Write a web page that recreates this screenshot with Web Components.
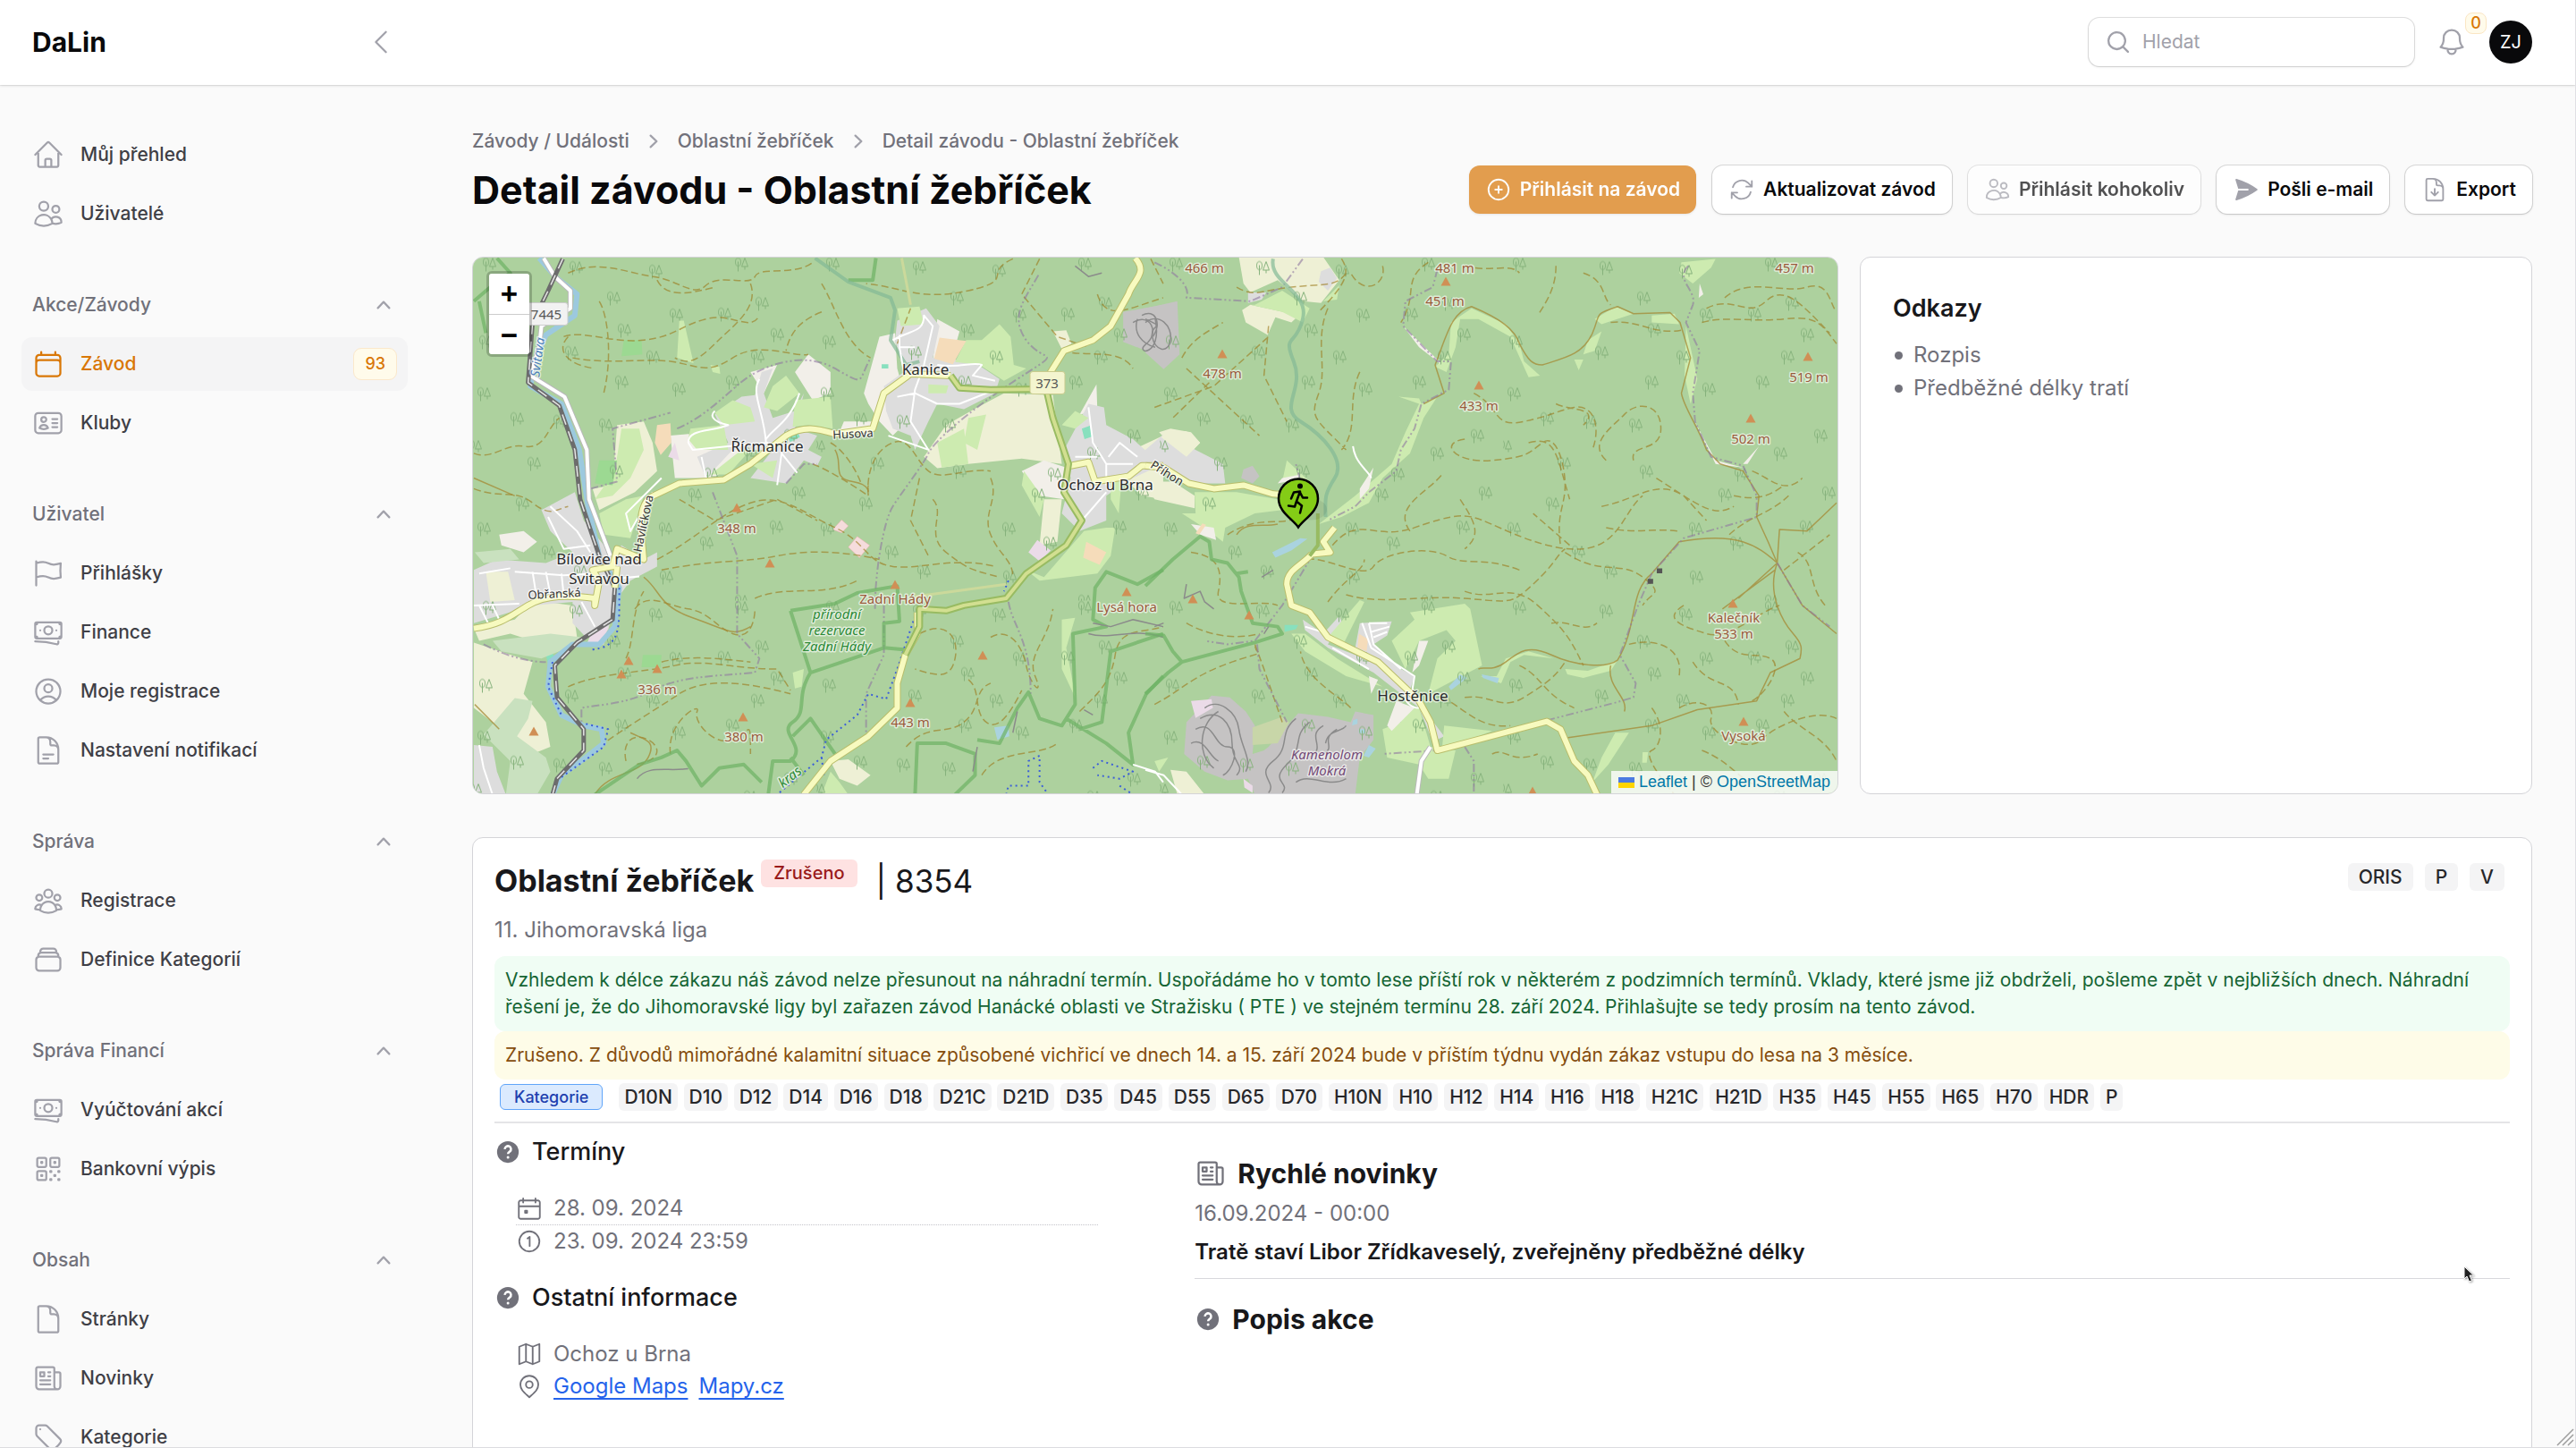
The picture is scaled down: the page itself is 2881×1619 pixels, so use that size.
<!DOCTYPE html>
<html lang="cs">
<head>
<meta charset="utf-8">
<title>Detail závodu - Oblastní žebříček</title>
<style>
  html, body { margin: 0; height: 100%; }
  body { font-family: Inter, "Noto Sans", sans-serif; font-size: 21px; line-height: 30px; color: #09090b; background: #fafafa; overflow: hidden; }
</style>
</head>
<body>
<app-shell>
  <top-bar slot="top"></top-bar>
  <side-nav slot="nav">
    <nav-group>
      <nav-item icon="home">Můj přehled</nav-item>
      <nav-item icon="users">Uživatelé</nav-item>
    </nav-group>
    <nav-group label="Akce/Závody">
      <nav-item icon="calendar" active badge="93">Závod</nav-item>
      <nav-item icon="identification">Kluby</nav-item>
    </nav-group>
    <nav-group label="Uživatel">
      <nav-item icon="flag">Přihlášky</nav-item>
      <nav-item icon="banknotes">Finance</nav-item>
      <nav-item icon="user-circle">Moje registrace</nav-item>
      <nav-item icon="document-text">Nastavení notifikací</nav-item>
    </nav-group>
    <nav-group label="Správa">
      <nav-item icon="user-group">Registrace</nav-item>
      <nav-item icon="stack">Definice Kategorií</nav-item>
    </nav-group>
    <nav-group label="Správa Financí">
      <nav-item icon="banknotes">Vyúčtování akcí</nav-item>
      <nav-item icon="qr">Bankovní výpis</nav-item>
    </nav-group>
    <nav-group label="Obsah">
      <nav-item icon="document">Stránky</nav-item>
      <nav-item icon="newspaper">Novinky</nav-item>
      <nav-item icon="tag">Kategorie</nav-item>
    </nav-group>
  </side-nav>
  <page-header>
    <action-button slot="actions" icon="plus-circle" kind="primary" muted>Přihlásit na závod</action-button>
    <action-button slot="actions" icon="arrow-path">Aktualizovat závod</action-button>
    <action-button slot="actions" icon="users" muted>Přihlásit kohokoliv</action-button>
    <action-button slot="actions" icon="paper-airplane">Pošli e-mail</action-button>
    <action-button slot="actions" icon="document-down">Export</action-button>
  </page-header>
  <race-overview>
    <race-map slot="map"></race-map>
    <link-card slot="links"></link-card>
  </race-overview>
  <race-detail></race-detail>
</app-shell>
<pointer-mark></pointer-mark>
<resize-grip></resize-grip>

<script>
const ICONS = {
  home: ['m2.25 12 8.954-8.955c.44-.439 1.152-.439 1.591 0L21.75 12M4.5 9.75v10.125c0 .621.504 1.125 1.125 1.125H9.75v-4.875c0-.621.504-1.125 1.125-1.125h2.25c.621 0 1.125.504 1.125 1.125V21h4.125c.621 0 1.125-.504 1.125-1.125V9.75M8.25 21h8.25'],
  users: ['M15 19.128a9.38 9.38 0 0 0 2.625.372 9.337 9.337 0 0 0 4.121-.952 4.125 4.125 0 0 0-7.533-2.493M15 19.128v-.003c0-1.113-.285-2.16-.786-3.07M15 19.128v.106A12.318 12.318 0 0 1 8.624 21c-2.331 0-4.512-.645-6.374-1.766l-.001-.109a6.375 6.375 0 0 1 11.964-3.07M12 6.375a3.375 3.375 0 1 1-6.75 0 3.375 3.375 0 0 1 6.75 0Zm8.25 2.25a2.625 2.625 0 1 1-5.25 0 2.625 2.625 0 0 1 5.25 0Z'],
  calendar: ['M6.75 3v2.25M17.25 3v2.25M3 18.75V7.5a2.25 2.25 0 0 1 2.25-2.25h13.5A2.25 2.25 0 0 1 21 7.5v11.25m-18 0A2.25 2.25 0 0 0 5.25 21h13.5A2.25 2.25 0 0 0 21 18.75m-18 0v-7.5A2.25 2.25 0 0 1 5.25 9h13.5A2.25 2.25 0 0 1 21 11.25v7.5'],
  identification: ['M15 9h3.75M15 12h3.75M15 15h3.75M4.5 19.5h15a2.25 2.25 0 0 0 2.25-2.25V6.75A2.25 2.25 0 0 0 19.5 4.5h-15a2.25 2.25 0 0 0-2.25 2.25v10.5A2.25 2.25 0 0 0 4.5 19.5Zm6-10.125a1.875 1.875 0 1 1-3.75 0 1.875 1.875 0 0 1 3.75 0Zm1.294 6.336a6.721 6.721 0 0 1-3.17.789 6.721 6.721 0 0 1-3.168-.789 3.376 3.376 0 0 1 6.338 0Z'],
  flag: ['M3 3v1.5M3 21v-6m0 0 2.77-.693a9 9 0 0 1 6.208.682l.108.054a9 9 0 0 0 6.086.71l3.114-.732a48.524 48.524 0 0 1-.005-10.499l-3.11.732a9 9 0 0 1-6.085-.711l-.108-.054a9 9 0 0 0-6.208-.682L3 4.5M3 15V4.5'],
  banknotes: ['M2.25 18.75a60.07 60.07 0 0 1 15.797 2.101c.727.198 1.453-.342 1.453-1.096V18.75M3.75 4.5v.75A.75.75 0 0 1 3 6h-.75m0 0v-.375c0-.621.504-1.125 1.125-1.125H20.25M2.25 6v9m18-10.5v.75c0 .414.336.75.75.75h.75m-1.5-1.5h.375c.621 0 1.125.504 1.125 1.125v9.75c0 .621-.504 1.125-1.125 1.125h-.375m1.5-1.5H21a.75.75 0 0 0-.75.75v.75m0 0H3.75m0 0h-.375a1.125 1.125 0 0 1-1.125-1.125V15m1.5 1.5v-.75A.75.75 0 0 0 3 15h-.75M15 10.5a3 3 0 1 1-6 0 3 3 0 0 1 6 0Zm3 0h.008v.008H18V10.5Zm-12 0h.008v.008H6V10.5Z'],
  'user-circle': ['M17.982 18.725A7.488 7.488 0 0 0 12 15.75a7.488 7.488 0 0 0-5.982 2.975m11.963 0a9 9 0 1 0-11.963 0m11.963 0A8.966 8.966 0 0 1 12 21a8.966 8.966 0 0 1-5.982-2.275M15 9.75a3 3 0 1 1-6 0 3 3 0 0 1 6 0Z'],
  'document-text': ['M19.5 14.25v-2.625a3.375 3.375 0 0 0-3.375-3.375h-1.5A1.125 1.125 0 0 1 13.5 7.125v-1.5a3.375 3.375 0 0 0-3.375-3.375H8.25m0 12.75h7.5m-7.5 3H12M10.5 2.25H5.625c-.621 0-1.125.504-1.125 1.125v17.25c0 .621.504 1.125 1.125 1.125h12.75c.621 0 1.125-.504 1.125-1.125V11.25a9 9 0 0 0-9-9Z'],
  'user-group': ['M18 18.72a9.094 9.094 0 0 0 3.741-.479 3 3 0 0 0-4.682-2.72m.94 3.198.001.031c0 .225-.012.447-.037.666A11.944 11.944 0 0 1 12 21c-2.17 0-4.207-.576-5.963-1.584A6.062 6.062 0 0 1 6 18.719m12 0a5.971 5.971 0 0 0-.941-3.197m0 0A5.995 5.995 0 0 0 12 12.75a5.995 5.995 0 0 0-5.058 2.772m0 0a3 3 0 0 0-4.681 2.72 8.986 8.986 0 0 0 3.74.477m.94-3.197a5.971 5.971 0 0 0-.94 3.197M15 6.75a3 3 0 1 1-6 0 3 3 0 0 1 6 0Zm6 3a2.25 2.25 0 1 1-4.5 0 2.25 2.25 0 0 1 4.5 0Zm-13.5 0a2.25 2.25 0 1 1-4.5 0 2.25 2.25 0 0 1 4.5 0Z'],
  stack: ['M6 6.878V6a2.25 2.25 0 0 1 2.25-2.25h7.5A2.25 2.25 0 0 1 18 6v.878m-12 0c.235-.083.487-.128.75-.128h10.5c.263 0 .515.045.75.128m-12 0A2.25 2.25 0 0 0 4.5 9v.878m13.5-3A2.25 2.25 0 0 1 19.5 9v.878m0 0a2.246 2.246 0 0 0-.75-.128H5.25c-.263 0-.515.045-.75.128m15 0A2.25 2.25 0 0 1 21 12v6a2.25 2.25 0 0 1-2.25 2.25H5.25A2.25 2.25 0 0 1 3 18v-6c0-.98.626-1.813 1.5-2.122'],
  qr: ['M3.75 4.875c0-.621.504-1.125 1.125-1.125h4.5c.621 0 1.125.504 1.125 1.125v4.5c0 .621-.504 1.125-1.125 1.125h-4.5A1.125 1.125 0 0 1 3.75 9.375v-4.5ZM3.75 14.625c0-.621.504-1.125 1.125-1.125h4.5c.621 0 1.125.504 1.125 1.125v4.5c0 .621-.504 1.125-1.125 1.125h-4.5a1.125 1.125 0 0 1-1.125-1.125v-4.5ZM13.5 4.875c0-.621.504-1.125 1.125-1.125h4.5c.621 0 1.125.504 1.125 1.125v4.5c0 .621-.504 1.125-1.125 1.125h-4.5A1.125 1.125 0 0 1 13.5 9.375v-4.5ZM6.75 6.75h.75v.75h-.75v-.75ZM6.75 16.5h.75v.75h-.75v-.75ZM16.5 6.75h.75v.75h-.75v-.75ZM13.5 13.5h.75v.75h-.75v-.75ZM13.5 19.5h.75v.75h-.75v-.75ZM19.5 13.5h.75v.75h-.75v-.75ZM19.5 19.5h.75v.75h-.75v-.75ZM16.5 16.5h.75v.75h-.75v-.75Z'],
  document: ['M19.5 14.25v-2.625a3.375 3.375 0 0 0-3.375-3.375h-1.5A1.125 1.125 0 0 1 13.5 7.125v-1.5a3.375 3.375 0 0 0-3.375-3.375H8.25m2.25 0H5.625c-.621 0-1.125.504-1.125 1.125v17.25c0 .621.504 1.125 1.125 1.125h12.75c.621 0 1.125-.504 1.125-1.125V11.25a9 9 0 0 0-9-9Z'],
  'document-down': ['M19.5 14.25v-2.625a3.375 3.375 0 0 0-3.375-3.375h-1.5A1.125 1.125 0 0 1 13.5 7.125v-1.5a3.375 3.375 0 0 0-3.375-3.375H8.25m.75 12 3 3m0 0 3-3m-3 3v-6m-1.5-9H5.625c-.621 0-1.125.504-1.125 1.125v17.25c0 .621.504 1.125 1.125 1.125h12.75c.621 0 1.125-.504 1.125-1.125V11.25a9 9 0 0 0-9-9Z'],
  newspaper: ['M12 7.5h1.5m-1.5 3h1.5m-7.5 3h7.5m-7.5 3h7.5m3-9h3.375c.621 0 1.125.504 1.125 1.125V18a2.25 2.25 0 0 1-2.25 2.25M16.5 7.5V18a2.25 2.25 0 0 0 2.25 2.25M16.5 7.5V4.875c0-.621-.504-1.125-1.125-1.125H4.125C3.504 3.75 3 4.254 3 4.875V18a2.25 2.25 0 0 0 2.25 2.25h13.5M6 7.5h3v3H6v-3Z'],
  tag: ['M9.568 3H5.25A2.25 2.25 0 0 0 3 5.25v4.318c0 .597.237 1.17.659 1.591l9.581 9.581c.699.699 1.78.872 2.607.33a18.095 18.095 0 0 0 5.223-5.223c.542-.827.369-1.908-.33-2.607L11.16 3.66A2.25 2.25 0 0 0 9.568 3ZM6 6h.008v.008H6V6Z'],
  bell: ['M14.857 17.082a23.848 23.848 0 0 0 5.454-1.31A8.967 8.967 0 0 1 18 9.75V9A6 6 0 0 0 6 9v.75a8.967 8.967 0 0 1-2.312 6.022c1.733.64 3.56 1.085 5.455 1.31m5.714 0a24.255 24.255 0 0 1-5.714 0m5.714 0a3 3 0 1 1-5.714 0'],
  'plus-circle': ['M12 9v6m3-3H9m12 0a9 9 0 1 1-18 0 9 9 0 0 1 18 0Z'],
  'arrow-path': ['M16.023 9.348h4.992v-.001M2.985 19.644v-4.992m0 0h4.992m-4.993 0 3.181 3.183a8.25 8.25 0 0 0 13.803-3.7M4.031 9.865a8.25 8.25 0 0 1 13.803-3.7l3.181 3.182m0-4.991v4.99'],
  'chevron-left': ['M15.75 19.5 8.25 12l7.5-7.5'],
  'calendar-day': ['M6.5 3.2v3.6M17.5 3.2v3.6M4.3 5h15.4a1.7 1.7 0 0 1 1.7 1.7v13a1.7 1.7 0 0 1-1.7 1.7H4.3a1.7 1.7 0 0 1-1.7-1.7v-13A1.7 1.7 0 0 1 4.3 5ZM2.6 10.2h18.8M8.2 14.2h1.8v1.8H8.2Z'],
  'circle-one': ['M21 12a9 9 0 1 1-18 0 9 9 0 0 1 18 0ZM10.4 9.4 12.3 7.9v8.2'],
  map: ['M3 5.4 9 3l6 2.4L21 3v15.6L15 21l-6-2.4L3 21ZM9 3v15.6M15 5.4V21'],
  pin: ['M15 10.5a3 3 0 1 1-6 0 3 3 0 0 1 6 0ZM20 10.6c0 4.6-3.6 7.2-8 11.2-4.4-4-8-6.6-8-11.2a8 8 0 0 1 16 0Z'],
  'paper-airplane': ['M3.478 2.404a.75.75 0 0 0-.926.941l2.432 7.905H13.5a.75.75 0 0 1 0 1.5H4.984l-2.432 7.905a.75.75 0 0 0 .926.94 60.519 60.519 0 0 0 18.445-8.986.75.75 0 0 0 0-1.218A60.517 60.517 0 0 0 3.478 2.404Z', 24, 1],
  search: ['M9 3.5a5.5 5.5 0 1 0 0 11 5.5 5.5 0 0 0 0-11ZM2 9a7 7 0 1 1 12.452 4.391l3.328 3.329a.75.75 0 1 1-1.06 1.06l-3.329-3.328A7 7 0 0 1 2 9Z', 20, 1],
  'chevron-up': ['M14.77 12.79a.75.75 0 0 1-1.06-.02L10 8.832 6.29 12.77a.75.75 0 1 1-1.08-1.04l4.25-4.5a.75.75 0 0 1 1.08 0l4.25 4.5a.75.75 0 0 1-.02 1.06Z', 20, 1],
  'chevron-right': ['M7.21 14.77a.75.75 0 0 1 .02-1.06L11.168 10 7.23 6.29a.75.75 0 1 1 1.04-1.08l4.5 4.25a.75.75 0 0 1 0 1.08l-4.5 4.25a.75.75 0 0 1-1.06-.02Z', 20, 1]
};

/* Registers an element whose open shadow root is filled from the given markup. */
function element(name, markup, css) {
  customElements.define(name, class extends HTMLElement {
    constructor() {
      super();
      const t = document.createElement('template');
      t.innerHTML = `<style>*{box-sizing:border-box}${css}</style>${typeof markup === 'function' ? markup(this) : markup}`;
      this.attachShadow({ mode: 'open' }).append(t.content.cloneNode(true));
    }
  });
}

element('app-icon', el => {
  const name = el.getAttribute('name');
  if (name === 'question') {
    return `<svg viewBox="0 0 24 24" aria-hidden="true"><circle cx="12" cy="12" r="9.7" fill="currentColor"/><path d="M9.3 9.5a2.75 2.75 0 1 1 4.5 2.1c-1.1.8-1.7 1.2-1.7 2.2" fill="none" stroke="#fff" stroke-width="2"/><circle cx="12.1" cy="16.7" r="1.2" fill="#fff"/></svg>`;
  }
  const [d, box = 24, solid] = ICONS[name];
  return `<svg viewBox="0 0 ${box} ${box}" aria-hidden="true"><path d="${d}" ${solid ? 'fill="currentColor" fill-rule="evenodd"' : 'fill="none" stroke="currentColor" stroke-width="1.5" stroke-linecap="round" stroke-linejoin="round"'}/></svg>`;
}, `:host{display:block;flex:none;width:var(--icon,30px);height:var(--icon,30px)}svg{display:block;width:100%;height:100%}`);

element('app-shell', `
  <slot name="top"></slot>
  <div class="body"><slot name="nav"></slot><main><slot></slot></main></div>`,
  `:host{display:flex;flex-direction:column;box-sizing:border-box;height:100vh;overflow:hidden;border-right:1px solid #e0e0e4;border-bottom:1px solid #dcdce0}
   .body{display:flex;flex:1;min-height:0}
   main{flex:1;min-width:0;padding:48px 48px 0;display:flex;flex-direction:column;gap:48px;overflow:hidden}
   main ::slotted(*){flex:none}`);

element('top-bar', `
  <div class="brand"><a href="#">DaLin</a><button aria-label="Sbalit postranní panel"><app-icon name="chevron-left"></app-icon></button></div>
  <div class="tools">
    <label><app-icon name="search"></app-icon><input type="search" placeholder="Hledat" aria-label="Hledat"></label>
    <button class="bell" aria-label="Oznámení"><app-icon name="bell"></app-icon><span>0</span></button>
    <button class="avatar">ZJ</button>
  </div>`,
  `:host{display:flex;justify-content:space-between;align-items:center;flex:none;height:95px;padding-bottom:2px;background:#fff;box-shadow:0 0 0 1px rgba(9,9,11,.06),0 1px 3px rgba(0,0,0,.12);position:relative;box-sizing:border-box}
   button{border:0;background:none;padding:0;font:inherit;color:#a1a1aa}
   .brand{width:480px;padding:0 36px;display:flex;justify-content:space-between;align-items:center}
   .brand app-icon,.bell app-icon{--icon:36px}
   .brand a{font-size:30px;line-height:36px;font-weight:700;color:#09090b;text-decoration:none}
   .tools{display:flex;align-items:center;gap:24px;padding-right:48px}
   label{display:flex;align-items:center;gap:12px;width:364px;height:54px;padding:0 18px;border-radius:12px;background:#fff;color:#a1a1aa;box-shadow:0 0 0 1px rgba(9,9,11,.12),0 1px 3px rgba(0,0,0,.1)}
   input{flex:1;min-width:0;border:0;outline:0;padding:0;background:none;font:inherit;line-height:36px}
   input::placeholder{color:#a1a1aa;opacity:1}
   .bell{position:relative}
   .bell span{position:absolute;left:33px;top:-15px;width:24px;height:24px;border-radius:8px;background:#fffbeb;border:1px solid #fbe6c4;color:#d97706;font-size:18px;line-height:22px;font-weight:500}
   .avatar{width:48px;height:48px;border-radius:50%;background:#09090b;color:#fff;font-size:20px}`);

element('side-nav', `<nav aria-label="Hlavní"><slot></slot></nav>`,
  `:host{display:block;flex:none;width:480px;overflow:hidden}
   nav{display:flex;flex-direction:column;gap:42px;padding:48px 24px}`);

element('nav-group', el => {
  const label = el.getAttribute('label');
  return (label ? `<button aria-expanded="true"><span>${label}</span><app-icon name="chevron-up"></app-icon></button>` : '') + `<slot></slot>`;
}, `:host{display:flex;flex-direction:column;gap:6px}
   button{display:flex;justify-content:space-between;align-items:center;height:60px;padding:0 12px;border:0;background:none;font:inherit;font-weight:500;color:#71717a;text-align:left}
   app-icon{color:#a1a1aa}`);

element('nav-item', el => `
  <a href="#" ${el.hasAttribute('active') ? 'aria-current="page"' : ''}><app-icon name="${el.getAttribute('icon')}"></app-icon><span class="t"><slot></slot></span>${el.hasAttribute('badge') ? `<span class="badge">${el.getAttribute('badge')}</span>` : ''}</a>`,
  `:host{display:block}
   a{display:flex;align-items:center;gap:18px;height:60px;padding:0 12px;border-radius:12px;font-weight:500;color:#3f3f46;text-decoration:none}
   app-icon{--icon:36px;color:#a1a1aa}
   .t{flex:1}
   a[aria-current]{background:#f4f4f5;color:#d97706}
   a[aria-current] app-icon{color:#d97706}
   .badge{height:36px;padding:0 12px;border:1px solid #fbe8cb;border-radius:9px;background:#fffbeb;font-size:18px;line-height:34px}`);

element('page-header', `
  <div>
    <nav aria-label="Drobečková navigace"><a href="#">Závody / Události</a><app-icon name="chevron-right"></app-icon><a href="#">Oblastní žebříček</a><app-icon name="chevron-right"></app-icon><a href="#">Detail závodu - Oblastní žebříček</a></nav>
    <h1>Detail závodu - Oblastní žebříček</h1>
  </div>
  <div class="actions"><slot name="actions"></slot></div>`,
  `:host{display:flex;justify-content:space-between;align-items:flex-end}
   nav{display:flex;align-items:center;gap:12px;color:#a1a1aa}
   a{font-weight:500;color:#71717a;text-decoration:none}
   h1{margin:12px 0 0;font-size:43px;line-height:54px;font-weight:700}
   .actions{display:flex;gap:18px}`);

element('action-button', el => `<button ${el.getAttribute('kind') === 'primary' ? 'class="primary"' : ''}><app-icon name="${el.getAttribute('icon')}"></app-icon><span><slot></slot></span></button>`,
  `:host{display:block}
   :host([muted]){opacity:.7}
   button{display:flex;align-items:center;gap:9px;height:54px;padding:0 18px;border:0;border-radius:12px;background:#fff;font:inherit;font-weight:600;color:#09090b;white-space:nowrap;box-shadow:0 0 0 1px rgba(9,9,11,.13),0 1px 3px rgba(0,0,0,.12)}
   app-icon{color:#a1a1aa}
   .primary{background:#d97706;color:#fff;box-shadow:0 1px 3px rgba(0,0,0,.12)}
   .primary app-icon{color:#fff}`);

element('race-overview', `<slot name="map"></slot><slot name="links"></slot>`,
  `:host{display:grid;grid-template-columns:repeat(3,minmax(0,1fr));gap:24px;min-height:601px}
   ::slotted([slot=map]){grid-column:span 2}`);

element('link-card', `
  <h2>Odkazy</h2>
  <ul><li><a href="#">Rozpis</a></li><li><a href="#">Předběžné délky tratí</a></li></ul>`,
  `:host{display:block;box-sizing:border-box;padding:36px;background:#fff;border:1px solid #d4d4d8;border-radius:12px}
   h2{margin:3px 0 16px;font-size:27px;line-height:36px;font-weight:600;color:#18181b}
   ul{margin:0;padding:0;list-style:none;color:#71717a;font-size:24px;line-height:36px;display:flex;flex-direction:column;gap:1px}
   li{display:flex;align-items:center;gap:12px}
   li::before{content:"";width:9px;height:9px;margin-left:2px;border-radius:50%;background:#71717a}
   a{color:inherit;text-decoration:none}`);

/* Map labels: class, x, y, text, optional rotation. */
const LABELS = [
  ['town',506,131,'Kanice'],['town',329,217,'Řícmanice'],['town',707,260,'Ochoz u Brna'],['town',141,343,'Bílovice nad'],['town',141,365,'Svitavou'],['town',1051,496,'Hostěnice'],
  ['peak',295,308,'348 m'],['peak',472,387,'Zadní Hády'],['peak',731,396,'Lysá hora'],['peak',206,488,'336 m'],['peak',303,541,'380 m'],['peak',489,525,'443 m'],
  ['peak',818,17,'466 m'],['peak',1098,17,'481 m'],['peak',1087,54,'451 m'],['peak',1478,17,'457 m'],['peak',838,135,'478 m'],['peak',1125,171,'433 m'],['peak',1494,139,'519 m'],['peak',1429,208,'502 m'],['peak',1410,408,'Kalečník'],['peak',1410,426,'533 m'],['peak',1421,540,'Vysoká'],
  ['park',407,404,'přírodní'],['park',407,422,'rezervace'],['park',407,440,'Zadní Hády'],['park',355,586,'kras',-38],
  ['pit',955,561,'Kamenolom'],['pit',955,579,'Mokrá'],
  ['street',425,202,'Husova',-3],['street',191,302,'Havlíčkova',-78],['street',91,381,'Obřanská',-3],['street',776,246,'Příhon',32],['river',73,116,'Svitava',-82]
];
const PEAKS = [[295,280],[332,342],[472,366],[731,374],[174,451],[166,466],[206,460],[302,514],[489,498],[570,445],[68,530],[1088,27],[838,108],[1125,143],[1493,111],[1429,180],[1409,387],[1421,519],[805,382],[868,400],[1185,597]];
const TREES = [[18,8],[115,12],[204,16],[300,8],[157,46],[323,52],[227,65],[281,64],[14,95],[169,82],[110,107],[340,87],[201,112],[318,112],[166,140],[12,153],[230,148],[290,140],[49,181],[148,188],[97,184],[2,212],[68,231],[248,266],[55,276],[364,264],[12,304],[339,302],[215,304],[261,320],[216,358],[300,385],[266,243],[120,352],[355,200],[84,330],[160,240],[310,220]];

element('race-map', () => `
  <svg class="map" viewBox="0 0 1526 600" preserveAspectRatio="xMidYMid slice" role="img" aria-label="Mapa okolí závodu">
    <defs>
      <pattern id="wood" width="384" height="384" patternUnits="userSpaceOnUse">
        ${TREES.map(([x, y]) => `<g transform="translate(${x} ${y})"><ellipse cx="-3.5" cy="-2.5" rx="3" ry="4.5"/><path d="M-3.5-3V8M4-7 .5 2.5h7ZM4 2.5V6"/></g>`).join('')}
      </pattern>
    </defs>
    <rect width="1526" height="600" fill="#add19e"/>
    <g transform="translate(-8 -6) scale(.4974 .3954)" class="land">
      <path class="farm" d="M1210 400 1320 405 1340 600 1250 585 1130 600 1060 612 1030 580 1080 490 1150 440ZM1320 225 1350 222 1362 260 1340 275ZM18 1065 110 1040 140 1000 180 990 240 1000 250 1090 200 1110 150 1100 100 1080 30 1100ZM18 1105 150 1160 130 1250 180 1330 190 1400 140 1425 100 1370 60 1330 18 1290ZM820 1440 860 1435 910 1480 880 1510 840 1490ZM1500 560 1568 520V700L1520 690 1480 640ZM340 490 400 480 420 540 430 620 380 680 300 730 285 670 330 660ZM1300 700 1340 700 1330 820 1290 830Z"/>
      <path class="light" d="M895 400 930 240 965 230 970 330 1000 470 960 520 930 480 905 430ZM1060 190 1110 225 1090 315 1050 310ZM770 290 820 340 820 400 780 420 740 340ZM640 340 700 320 670 400ZM460 520 500 515 620 560 560 640 470 640ZM1380 460 1418 375 1420 450ZM1250 620 1300 590 1350 610 1345 700 1290 690ZM75 800 130 790 160 820 130 850 80 830ZM850 480 920 480 915 520 840 510Z"/>
      <path class="town" d="M970 195 1035 160 1065 210 1050 300 1140 310 1200 360 1190 400 1120 445 1060 430 1040 480 1010 560 1000 520 960 500 945 450 940 380 985 340 965 250ZM560 460 620 410 650 405 665 340 690 330 670 400 690 470 740 450 760 400 740 500 790 520 770 560 800 580 790 605 760 590 720 655 640 640 690 560 600 560 540 640 520 580 590 540ZM170 730 245 680 265 760 330 860 350 830 400 870 430 850 430 890 370 930 335 990 320 1070 270 1090 240 1050 240 990 150 1000 18 1050V900L70 870 180 880 240 850 190 790ZM1345 560 1400 430 1435 440 1440 490 1500 530 1540 575 1568 560V600L1500 640 1440 690 1440 760 1380 790 1340 740 1360 640ZM18 1395 60 1400 70 1470 90 1535 18 1535Z"/>
      <path class="grass" d="M970 160 1020 155 1030 205 978 210ZM1125 250 1160 250 1200 205 1225 240 1232 320 1260 330 1210 365 1155 320 1100 312ZM740 420 820 410 825 500 770 490 735 495ZM560 455 600 420 640 440 650 480 580 490ZM505 500 580 490 590 560 520 560 500 530ZM690 380 720 350 750 400 700 450 670 440ZM480 195 490 195 512 315 475 300ZM550 320 570 325 572 345 555 340ZM350 500 390 500 400 560 370 640 330 690 290 700 335 620ZM360 700 400 690 370 810 310 800 300 740ZM1040 375 1085 378 1080 400 1040 400ZM620 560 640 560 590 630 550 630ZM1440 780 1390 790 1300 920 1260 900 1290 930 1420 910 1450 860 1460 780ZM1130 470 1170 460 1150 560 1120 540ZM1060 540 1120 500 1130 600 1070 610ZM1255 620 1300 700 1290 750 1250 660ZM1340 1040 1370 1035 1350 1120 1365 1220 1370 1260 1340 1180ZM735 1190 760 1180 755 1230 740 1235ZM1370 450 1400 470 1370 500 1340 490ZM640 600 700 590 690 640ZM1450 640 1475 640 1468 740 1450 700ZM820 1470 840 1500 860 1535 800 1535Z"/>
      <path class="orange" d="M1065 243 1125 252 1095 318 1053 302ZM430 490 460 485 462 540 438 575 425 540ZM1395 820 1440 850 1425 885 1388 865Z"/>
      <path class="orchard" d="M355 250 395 250 397 290 350 295ZM398 1140 440 1140 438 1175 395 1175ZM300 590 340 590 330 660 290 655Z"/>
      <path class="pink" d="M285 1070 320 1060 310 1110 270 1115ZM1285 815 1315 845 1290 875 1265 850ZM470 540 480 590 455 580Z"/>
      <path class="yard" d="M45 905 95 905 110 985 55 990Z"/>
      <path class="pool" d="M935 318h15v12h-15ZM1385 500l18-8 6 30-18 8ZM722 520l25-8 4 12-22 14ZM180 1140l15-4 10 20-20 12Z"/>
      <path fill="#f5dcdc" stroke="#eda9a9" d="M845 758 860 775 845 795 825 785ZM880 805 908 830 885 865 860 835Z"/>
      <path class="allot" d="M40 1365 110 1262 150 1270 140 1320 115 1370 180 1430 190 1470 160 1535 90 1535 100 1440ZM60 1100 190 1080 260 1090 230 1120 170 1150 80 1130ZM20 850 100 840 120 870 40 880Z"/>
      <path class="pit" d="M1478 170 1568 150V320L1530 280 1478 255Z"/>
      <path class="water" d="M1188 1345 1220 1340 1222 1370 1195 1380Z"/>
    </g>
    <g transform="translate(752 -6) scale(.5102 .3954)" class="land">
      <path class="farm" d="M205 15H390L425 80 385 145 345 140 290 80 230 115 215 90ZM212 165 230 150 320 175 332 185 320 200 285 185 268 235 220 200ZM30 510 55 500 100 510 120 540 90 580 60 550ZM0 650 60 650 108 690V725L20 700ZM55 1465 90 1470 130 1535H70Z"/>
      <path class="town" d="M0 560 45 510 110 560 170 600 175 655 100 655 0 590ZM385 55 405 45 420 75 400 110 380 85ZM225 115h40l-10 20-30 10ZM345 1040 390 1080 425 1030 430 1045 400 1110 500 1160 590 1260 655 1370 630 1385 600 1290 500 1190 400 1120 350 1070ZM470 1050 540 1045 530 1085 500 1110 560 1180 590 1200 580 1240 460 1120Z"/>
      <path class="farm" d="M45 505 90 508 120 540 90 580 35 525Z"/>
      <path class="grass" d="M240 150 300 110 360 160 345 200 300 170 230 150ZM390 140 425 95 420 135ZM108 680 200 680 290 700 300 730 240 740 175 780 170 820 140 790 80 740 110 740ZM310 590 360 650 300 650ZM715 160 790 205 820 260 830 310 865 350 840 355 800 240 730 190 690 190 680 270 660 340 635 325 665 290 670 200ZM985 190 1030 155 1070 175 1000 205ZM1110 180 1160 175 1170 205 1110 200ZM1000 225 985 280 960 290 970 250ZM940 305 960 305 950 335ZM1175 30 1250 20 1240 45 1200 90 1170 60ZM1185 210 1210 360 1195 430 1182 350ZM555 410 600 415 605 430 640 410 610 470 580 570 520 640 490 710 430 750 380 770 460 690 540 600 570 510 600 430ZM580 1020 700 995 712 1010 738 1170 620 1250 640 1150 680 1100 660 1070 600 1100 570 1180 540 1100 590 1040ZM430 1120 400 1090 470 985 480 990ZM320 1080 350 1080 420 1150 520 1230 440 1200 350 1130ZM790 1150 840 1130 895 1150 830 1140 800 1160 780 1220 735 1200 770 1200ZM920 1180 970 1185 1035 1155 1020 1185 960 1205 925 1195ZM520 1350 560 1330 570 1290 600 1290 625 1400 680 1410 665 1490 620 1490 600 1450 530 1430ZM1030 1360 1060 1360 1015 1450 980 1500 1000 1430ZM655 1340 760 1355 650 1410ZM1090 1415h12l-3 30h-10ZM20 1440 50 1430 30 1470Z"/>
      <path class="light" d="M565 210 640 305 650 320 600 270ZM1215 90l8 30-10 10ZM300 640l40-10-10 15-40 10ZM600 1100 620 1100 600 1170 585 1190ZM490 1200l20 10-15 40ZM550 1270 590 1290 540 1355 530 1340ZM470 670l30-60-10 60-20 30ZM100 770 150 780 155 815 120 800ZM1310 600 1345 550 1320 600ZM1200 470 1250 590 1310 610 1250 600Z"/>
      <path class="pit" d="M0 160 70 140 75 290 40 332 0 285ZM145 1255 185 1260 220 1300 240 1340 235 1420 260 1410 270 1400 335 1305 400 1315 450 1330 460 1300 500 1310 500 1380 470 1430 460 1535H240L225 1490 180 1495 130 1470 85 1420 90 1330ZM215 615l20-10 15 30-15 20-25-15Z"/>
      <path fill="#c8d6a8" d="M235 1345 300 1315 315 1330 290 1390 235 1395Z"/>
      <path class="pink" d="M100 1270 145 1265 148 1290 110 1318ZM215 1490l20 20 0 20-18-15Z"/>
      <path class="orange" d="M468 1080 488 1095 485 1130 465 1120ZM125 768l8 4-15 28-8-4Z"/>
      <path class="pool" d="M305 1055h30l-5 12-25 8Z"/>
      <path class="water" d="M278 850 340 810 355 812 320 845 285 865ZM665 1230 690 1195 705 1205 670 1240ZM737 1195 775 1205 772 1220 740 1205ZM490 1395l15 10-15 25-12-5ZM455 1325l10-5 0 15-12 5ZM468 1350h14v12h-14Z"/>
    </g>
    <rect width="1526" height="600" fill="url(#wood)"/>
    <g transform="translate(-8 -6) scale(.4974 .3954)" class="ways">
      <path class="track" d="M230 60C300 20 360 60 420 70S510 130 540 95 640 100 650 70 740 70 780 30M220 240C260 220 330 260 400 250S480 210 540 190 640 230 660 180M240 300C330 320 400 300 460 310S540 350 600 300 740 300 770 290M60 120C100 140 130 120 150 180M300 140C320 180 330 300 310 400M230 240C200 280 230 320 290 330M430 80C450 130 500 120 560 100M640 90C660 160 600 210 560 260S500 320 470 300M800 170C760 190 730 220 720 280M800 90C830 150 850 260 910 300M970 260 1000 160M1230 20C1160 60 1240 80 1130 110S980 100 900 90M1290 20 1250 120 1330 240 1400 270M18 570C60 590 90 540 130 550 180 560 180 500 210 470M18 670C80 700 110 670 150 710S200 730 230 720M430 870C520 810 570 740 640 710S760 740 830 780 900 880 960 890 1100 860 1190 890M440 900C560 870 620 880 700 860S860 850 930 870M480 700 560 760 700 700 790 760M650 980C720 940 800 980 880 930M380 1010C410 960 450 1000 500 1010S560 1060 600 1080 650 1040 650 1010M230 1230C300 1190 400 1190 470 1170S600 1180 700 1180L730 1240M360 1150C380 1100 370 1020 400 960M440 1160C500 1140 570 1150 640 1160M300 1400C340 1360 420 1300 480 1250S640 1220 730 1250M360 1440C350 1380 380 1360 410 1380S440 1440 380 1450M460 1420C450 1330 530 1270 520 1300S560 1400 600 1380 640 1310 640 1420M820 540C850 560 880 620 890 660M780 600C820 620 870 660 905 690 900 620 920 560 960 540S1010 590 1040 620 1120 610 1180 620M1050 700C1080 740 1030 800 1080 850S1140 900 1200 920M1180 640C1200 700 1160 740 1180 800S1230 870 1230 920M1020 640 1000 760 1040 860M1020 1080C1080 1040 1110 1090 1100 1150S1060 1200 1010 1180M1180 1090C1220 1060 1250 1110 1260 1170S1300 1260 1280 1200 1310 1100 1320 1010M1130 1210C1160 1240 1140 1300 1170 1330S1230 1290 1250 1240M1380 1300C1420 1250 1450 1220 1460 1140S1520 1080 1568 1060M990 1400C1040 1330 1080 1370 1120 1330S1140 1240 1180 1220M1160 1480C1200 1400 1290 1430 1330 1390M1340 280C1400 300 1470 270 1500 330M1540 20 1568 90M1420 120C1440 200 1490 160 1568 130"/>
      <path class="path" d="M830 560C850 600 820 640 870 650S900 700 905 660M400 920C440 960 430 1000 510 1035S600 1090 640 1060M370 1360C400 1380 430 1380 410 1430S320 1470 290 1535M18 640 110 690M20 1280 75 1350"/>
      <path class="bound" d="M920 1010C920 900 940 760 960 720S1030 600 1040 570 1130 450 1240 360 1300 320 1260 250 1260 130 1290 60M555 680 610 860V1080L660 1150 650 1190C560 1200 480 1200 420 1240S300 1280 260 1290V1330M940 1000V1140L900 1250V1370M280 670 340 650 330 500 460 455M475 500C550 460 600 380 640 350S760 280 830 330 880 370 910 300M40 1110C100 1150 150 1160 180 1160M1220 990C1230 1060 1270 1100 1270 1250M720 655 760 600 790 600"/>
      <path class="park" d="M18 140 55 100 100 60 70 18M30 140 45 230M860 80H915L922 18M730 1015 775 1190 940 1120M730 1015 830 995 880 965 970 945 975 1045 940 1050V1120L985 1125M775 1190C740 1260 770 1300 735 1330S770 1400 730 1440L690 1440 680 1535M735 1370 775 1320 830 1420M290 1535 390 1450 440 1430 475 1410 495 1440 530 1510 570 1460 625 1450 665 1500M760 1480 730 1430M1010 1535 1015 1390 1080 1390 1145 1420V1480L1100 1535M1150 1380 1200 1390 1240 1290 1265 1245 1290 1320 1340 1340 1370 1280 1365 1080 1440 1060 1410 1040 1415 950 1440 905 1510 940 1568 900M1350 1320 1440 1390 1500 1450 1490 1360 1530 1250 1568 1200M1380 1350 1430 1330 1450 1130 1568 1080"/>
      <path class="park thin" d="M785 18 860 85 955 130 965 165 955 250 990 320 1020 310"/>
      <path class="cliff" d="M1410 1050 1450 1060 1500 1040 1568 1060M1400 1080C1450 1100 1500 1060 1568 1090M1390 1295 1410 1310M1240 1300 1230 1360M1150 1400 1140 1470M385 1490C410 1450 450 1470 500 1462M1500 200C1540 170 1560 230 1530 260S1568 300 1550 190M1510 190C1500 230 1520 260 1550 270M1520 180C1550 160 1565 200 1545 240M1370 40 1400 70 1430 60"/>
      <path class="street" d="M960 250C1000 220 1030 230 1030 180L1050 210 1030 320 1010 390 1000 480 1040 560 950 520M975 235V270H1010M975 270 985 340M1060 320C1110 330 1140 310 1160 320L1140 350 1190 365M970 410 1010 400 1060 430 1110 430 1200 385M660 360C640 400 670 450 675 540M500 540C500 500 550 510 590 490 550 480 550 460 560 450M750 400C730 480 690 500 675 530M500 540 510 560 590 550 680 540M700 660 710 570 745 625M540 640 530 580M420 680 370 790 360 740 440 640M1400 440 1410 540 1440 600 1500 600M1440 600V660M1445 580 1470 540 1510 580M1440 680 1385 760M1370 580H1420M30 910 100 895M110 905 220 915 290 910M150 905 160 985M180 905 190 970M215 910 220 970M18 1000 120 995M30 1000 50 1050M60 1000 75 1040M185 750 220 840 280 830M190 720 250 790 280 850M330 925 390 918M260 990 290 1060M30 1395 40 1460 60 1535M1500 1450 1550 1470 1568 1500"/>
      <path class="river" d="M165 18 205 75 250 120 245 180 180 235 155 310 145 380 215 430 255 560 275 720 300 860 345 950 335 1060 300 1110 240 1110 190 1160 185 1230 215 1310 265 1340 305 1350 310 1390 270 1430 215 1480 195 1535"/>
      <path class="white-edge" d="M175 18 200 70 235 110 235 160 170 210 165 270 145 350 222 410 272 560 277 700 325 860"/>
      <path class="white" d="M175 18 200 70 235 110 235 160 170 210 165 270 145 350 222 410 272 560 277 700 325 860"/>
      <path class="trail" d="M345 950V1000C345 1080 340 1120 280 1125M195 1160 185 1230 215 1310M270 1335 320 1350 310 1400 210 1490M1010 1030 970 1180 945 1265 905 1250 880 1310 810 1380 800 1430 700 1535M1220 930 1210 960M1215 1535 1220 1510 1265 1510 1265 1440 1290 1425V1500L1310 1535M1410 1460 1430 1440 1500 1470 1470 1490 1420 1480M1470 1510 1500 1535M800 1430 805 1480"/>
      <path class="rail-edge" d="M218 20 185 110 150 200 140 370 210 435 245 560 257 700 300 860 335 950 330 1040 250 1105 200 1170 205 1260 265 1350 265 1410 205 1490 195 1535"/>
      <path class="rail" d="M218 20 185 110 150 200 140 370 210 435 245 560 257 700 300 860 335 950 330 1040 250 1105 200 1170 205 1260 265 1350 265 1410 205 1490 195 1535"/>
      <path class="road-edge" d="M18 1065C80 1055 100 1030 140 1000S230 970 290 980V1000L300 930 285 900 330 890 340 840 400 870 395 800C390 740 400 700 425 688L480 655 580 645 640 600 720 520C760 490 790 500 830 515L915 500 940 400 1000 345 1090 350M1505 18C1535 60 1500 80 1490 120L1450 210 1410 250 1345 280 1310 350M1015 1020 1015 1080 988 1140 970 1220V1290L905 1370 820 1440 760 1535M1360 605 1400 595 1415 650 1490 635 1520 605H1568M335 950 340 890"/>
      <path class="road" d="M18 1065C80 1055 100 1030 140 1000S230 970 290 980V1000L300 930 285 900 330 890 340 840 400 870 395 800C390 740 400 700 425 688L480 655 580 645 640 600 720 520C760 490 790 500 830 515L915 500 940 400 1000 345 1090 350M1505 18C1535 60 1500 80 1490 120L1450 210 1410 250 1345 280 1310 350M1015 1020 1015 1080 988 1140 970 1220V1290L905 1370 820 1440 760 1535M1360 605 1400 595 1415 650 1490 635 1520 605H1568M335 950 340 890"/>
      <path class="road-park" d="M1090 350 1110 385 1180 390 1305 388 1320 470 1355 600 1345 680 1385 760 1350 830 1260 910 1215 980 1120 1000 1080 1015 1020 1010V1060L988 1140"/>
      <path class="road-park in" d="M1090 350 1110 385 1180 390 1305 388 1320 470 1355 600 1345 680 1385 760 1350 830 1260 910 1215 980 1120 1000 1080 1015 1020 1010V1060L988 1140"/>
      <path fill="none" stroke="#cbd99b" stroke-width="3" d="M980 18 1000 150M1010 975 1215 940"/>
    </g>
    <g transform="translate(752 -6) scale(.5102 .3954)" class="ways">
      <path class="track" d="M20 440 150 380 270 240M80 300C100 250 130 230 170 200M90 330 250 520M140 370 60 470M200 100C240 130 250 110 320 100S420 100 440 60M270 210 260 350 310 480M520 40C530 90 480 130 450 60M430 20C450 60 440 90 380 170M620 30C560 80 600 120 560 200M700 40C760 60 800 30 820 60M900 40C900 100 880 140 860 180M960 60C1010 80 1000 130 1020 150M1020 200C1080 190 1120 240 1180 220M1230 160C1290 120 1320 190 1360 140S1440 150 1500 230M1220 200C1270 180 1330 200 1400 190S1480 200 1515 260M1270 130C1320 70 1400 120 1450 100S1500 150 1515 170M400 160C370 250 400 330 380 400S370 470 440 560M470 340C440 420 470 500 430 560M720 400C780 440 760 500 830 480S900 450 940 440 1000 490 980 560M900 430C930 450 1000 440 960 490M1010 590C970 540 1020 500 1050 460S1130 430 1130 500 1060 540 1070 590M700 530C640 540 680 600 760 590S840 570 870 540 920 600 920 660 900 740 910 830M840 540C900 520 900 570 930 700M410 830C470 740 500 820 590 780S700 740 740 760 880 850 960 840 1050 730 1090 690M690 700C720 760 740 800 700 840M580 790C540 720 620 680 650 630M930 830 850 740M920 850C1000 920 1040 870 1090 920S1110 960 1090 1000M1000 720C1080 700 1120 640 1180 690S1260 740 1290 720M1120 640 1180 690 1230 760M1010 780C1080 800 1100 780 1170 790M820 900C740 860 700 890 660 860S520 850 500 890 400 860 350 870M400 990C440 920 480 900 480 870M440 970C520 1000 600 970 700 980S800 1000 850 940 900 860 920 840M700 960C760 990 800 930 860 1000S930 1090 960 1170M890 1050C930 1040 960 1080 990 1050M1060 1110C1120 1090 1180 1120 1170 1200M1180 1000C1130 1040 1180 1060 1230 1080S1340 1020 1390 1000M1270 1100C1300 1160 1340 1130 1370 1150S1360 1250 1330 1270M1200 1160C1240 1240 1290 1200 1300 1280M1110 1290C1140 1340 1130 1400 1110 1410S1130 1490 1160 1535M1170 1290C1210 1260 1250 1280 1240 1320S1320 1420 1350 1380 1470 1290 1515 1320M1220 1410C1280 1440 1300 1490 1340 1510M1400 1300C1430 1350 1490 1370 1515 1440M700 1260C760 1250 780 1300 830 1260S900 1200 920 1160M650 1260C700 1290 730 1350 800 1340M820 1170C870 1200 870 1250 940 1290M760 1420C790 1400 800 1450 860 1420M180 800C250 740 300 780 330 750M100 850C160 860 170 900 160 960S250 980 290 1000M90 1050C130 1080 190 1100 250 1080M20 1280C80 1240 100 1200 190 1160S240 1150 240 1110M300 1330 260 1180 240 1110M450 1290C430 1260 350 1210 340 1130M1400 900 1500 800M1430 850C1470 880 1450 940 1490 1000M1280 800C1320 750 1370 740 1410 690M1330 620C1370 640 1400 690 1440 640M1290 690C1330 700 1360 700 1400 660"/>
      <path class="path" d="M635 320C660 240 670 170 715 155 780 190 810 220 820 260 840 310 850 320 870 320 920 300 960 290 980 230S980 180 1035 155L1070 175 1150 172 1172 200 1195 300 1175 400C1180 440 1210 490 1230 560L1260 600 1310 620 1345 690 1340 750 1365 820 1385 880 1440 1000 1515 1080M1385 880C1340 830 1300 790 1170 820L1110 910C1060 960 1080 1060 1035 1155 1010 1180 940 1170 890 1140S820 1130 790 1160 740 1170 730 1180M1385 880 1390 785 1450 790 1515 710M1385 880 1300 980M1385 880C1360 970 1400 1050 1420 1080S1440 1120 1435 1150L1370 1190 1340 1270 1210 1295 1110 1340 920 1375M1380 900 1265 1010M1020 1170C1010 1230 1060 1260 1050 1300M200 800C220 760 260 780 290 770M635 320 655 400 610 430"/>
      <path class="bound" d="M640 50 630 100 570 140 565 210 640 310H670L665 390 605 430 590 500 560 560 550 620 490 680 460 720 400 760M20 30C70 60 100 100 90 130L230 140 300 100 345 20M1190 40C1160 80 1210 110 1200 150L1185 200 1215 280 1200 400 1205 480 1240 580 1310 605 1340 690V750L1180 810 1110 910 1080 1000 1040 1140 1075 1220 1070 1260 1030 1275 880 1325 640 1410 520 1420M300 660 340 650 330 600M370 850 300 1000 240 1100 180 1110 130 1100M245 1110 250 1180 310 1330M700 1400 720 1440 720 1535M1385 880 1440 1000 1500 1060"/>
      <path class="park" d="M0 945 60 870 120 805 140 820 145 870 180 880 205 920 210 960 235 1050 290 1060 300 1080 240 1105 80 1160 50 1190 0 1250M0 1080 40 1085 60 1130 80 1160M200 910 225 905"/>
      <path class="park thin" d="M280 20C270 90 360 110 345 190S300 230 325 310 290 440 340 480 440 590 415 640 395 700 395 750"/>
      <path class="cliff" d="M90 940 85 980 120 960 130 990 150 1010M40 1050 20 1060M255 920 280 900M270 1060 260 1080M130 1290C160 1260 200 1300 205 1350S235 1440 220 1470M120 1320C160 1290 190 1330 190 1390S220 1450 200 1480M110 1350C150 1320 150 1400 180 1400S190 1470 170 1480M100 1390C130 1370 140 1430 160 1440M160 1300C120 1330 110 1420 150 1460M330 1320C290 1360 320 1400 280 1440S290 1500 270 1530M360 1330C320 1370 350 1400 310 1450S320 1500 300 1530M390 1340C350 1370 400 1400 360 1430M420 1350C380 1380 420 1400 390 1420M330 1500C360 1470 400 1520 440 1490M440 1340C430 1360 400 1350 395 1390M0 200C30 170 60 210 55 250S20 280 15 240 50 220 0 190"/>
      <path class="street" d="M475 1050 495 1120 590 1200 585 1240M490 1050H530M495 1075 535 1060M500 1090 530 1075M490 1050 500 1110 560 1180M410 1120 490 1180M600 1290C580 1290 570 1270 570 1260M350 1060 400 1080M455 550C460 600 490 620 495 640M0 1465 40 1480 80 1535"/>
      <path class="white-edge" d="M625 1400 605 1440 595 1535"/>
      <path class="white" d="M625 1400 605 1440 595 1535"/>
      <path class="road-edge" d="M0 605 40 610 95 655 150 670 215 660 280 685 330 690M415 780 390 820 405 850 365 855M365 855C340 890 310 900 310 940L320 1000 360 1020 400 1090 510 1160 600 1270 625 1330 640 1410 880 1328 910 1350 940 1440 970 1480 990 1535"/>
      <path class="road" d="M0 605 40 610 95 655 150 670 215 660 280 685 330 690M415 780 390 820 405 850 365 855M365 855C340 890 310 900 310 940L320 1000 360 1020 400 1090 510 1160 600 1270 625 1330 640 1410 880 1328 910 1350 940 1440 970 1480 990 1535"/>
      <path class="road-park thin" d="M378 740 378 830 360 860"/>
      <path fill="#555" d="M1101 925h12v14h-12ZM1121 895h12v14h-12Z"/>
    </g>
    <g class="shield"><rect x="57" y="51" width="49" height="25" rx="3" fill="#f2f2f2" stroke="#ccc"/><text x="82" y="69">7445</text><rect x="623" y="128" width="39" height="25" rx="3" fill="#f4f5cf" stroke="#c9cb8d"/><text x="642" y="146">373</text></g>
    ${PEAKS.map(([x, y]) => `<path fill="#d08f55" d="M${x} ${y - 5}l5.5 10h-11z"/>`).join('')}
    ${LABELS.map(([c, x, y, t, r]) => `<text class="l-${c}" x="${x}" y="${y}"${r ? ` transform="rotate(${r} ${x} ${y - 4})"` : ''}>${t}</text>`).join('')}
    <g transform="translate(923 274)"><ellipse cx="14" cy="8" rx="18" ry="12" fill="#000" opacity=".07"/><path d="M0 28C-6 19-22 11-22-4a22 22 0 0 1 44 0C22 11 6 19 0 28Z" fill="#84cc16" stroke="#000" stroke-width="2.5"/>
      <circle cx="2" cy="-18" r="3"/><path d="M-8-4-5-11 2-12-2-1 4 4 2 12M2-11 5-5 10-5M-2-1-4 5-11 4" fill="none" stroke="#000" stroke-width="2.5" stroke-linecap="round" stroke-linejoin="round"/></g>
  </svg>
  <div class="zoom"><button aria-label="Přiblížit">+</button><button aria-label="Oddálit">−</button></div>
  <div class="credit"><svg viewBox="0 0 18 12" aria-hidden="true"><path fill="#4c7be1" d="M0 0h18v6H0z"/><path fill="#ffd500" d="M0 6h18v6H0z"/></svg><a href="#">Leaflet</a><span>|</span><span>©</span><a href="#">OpenStreetMap</a></div>`,
  `:host{display:block;position:relative;box-sizing:border-box;border:1px solid #d4d4d8;border-radius:12px;overflow:hidden}
   .map{position:absolute;inset:0;width:100%;height:100%;display:block}
   #wood *{fill:none;stroke:#86b27c;stroke-width:1}
   .land .farm{fill:#eef0d5}.light{fill:#f2efe9}.land .town{fill:#dddddd}.grass{fill:#cdebb0}.orange{fill:#f5dcba}.orchard{fill:#9cd992}.pink{fill:#ebdbe8}.allot{fill:#c9e1bf}.land .pit{fill:#c5c3c3}.water{fill:#aad3df}.pool{fill:#88e0be}.yard{fill:#eef0d5}
   .ways path{vector-effect:non-scaling-stroke;stroke-linejoin:round}
   .ways path[class]{fill:none}
   .track{stroke:#9c7a1c;stroke-width:1.5;stroke-dasharray:8 4;opacity:.62}
   .path{stroke:#a58a35;stroke-width:1.5;opacity:.75}
   .bound{stroke:#9079a0;stroke-width:2;stroke-dasharray:9 3 2 3 2 3;opacity:.6}
   .park{stroke:#6db364;stroke-width:4;opacity:.7}
   .park.thin{stroke:#83b996}
   .cliff{stroke:#8b8b8b;stroke-width:1.5}
   .street{stroke:#fff;stroke-width:2}
   .river{stroke:#9cc9de;stroke-width:6}
   .white-edge{stroke:#b9b9b9;stroke-width:6}.white{stroke:#fff;stroke-width:4}
   .trail{stroke:#3c5fd8;stroke-width:2;stroke-dasharray:2 4}
   .rail-edge{stroke:#6c6c6c;stroke-width:5}.rail{stroke:#e6e6e6;stroke-width:1.5;stroke-dasharray:12 8}
   .road-edge{stroke:#b9bd6b;stroke-width:8}.road{stroke:#f7fabf;stroke-width:6}
   .road-park{stroke:#98bb62;stroke-width:8}.road-park.in{stroke:#d2df91;stroke-width:4}.road-park.thin{stroke-width:4}
   text{font-family:"Noto Sans",sans-serif;text-anchor:middle;paint-order:stroke;stroke:rgba(255,255,255,.6);stroke-width:3px;stroke-linejoin:round}
   .l-town{font-size:17px;fill:#2b2b2b}.l-peak{font-size:15px;fill:#9a5b3c}.l-park{font-size:15px;font-style:italic;fill:#2d8a37}.l-pit{font-size:15px;font-style:italic;fill:#734a77}.l-street{font-size:13px;fill:#333}.l-river{font-size:14px;font-style:italic;fill:#4c80ba}
   .shield text{font-size:15px;fill:#555;stroke:none}
   .zoom{position:absolute;left:15px;top:15px;border:3px solid rgba(0,0,0,.2);background-clip:padding-box;border-radius:6px;overflow:hidden}
   .zoom button{display:block;width:45px;height:45px;padding:0;border:0;background:#fff;font:700 33px/45px "Liberation Sans",sans-serif;color:#000}
   .zoom button+button{border-top:1px solid #ccc}
   .credit{position:absolute;right:0;bottom:0;display:flex;align-items:center;gap:5px;height:25px;padding:0 8px;background:rgba(255,255,255,.8);font:18px/25px "Liberation Sans",sans-serif;color:#333}
   .credit svg{width:18px;height:12px}.credit a{color:#0078a8;text-decoration:none}`);

element('tag-chip', `<slot></slot>`,
  `:host{display:inline-block;vertical-align:top;padding:0 6px;border-radius:6px;background:#f4f4f5;color:#27272a;font-size:21px;line-height:31px;font-weight:500}
   :host([wide]){padding:0 12px}
   :host([danger]){padding:0 14px;background:#fee2e2;color:#991b1b;font-size:20px}`);

element('icon-row', el => `<app-icon name="${el.getAttribute('icon')}"></app-icon><span><slot></slot></span>`,
  `:host{display:flex;align-items:center;gap:12px;line-height:36px}
   :host([large]) app-icon{--icon:36px}
   app-icon{color:#71717a}`);

const CATEGORIES = 'D10N D10 D12 D14 D16 D18 D21C D21D D35 D45 D55 D65 D70 H10N H10 H12 H14 H16 H18 H21C H21D H35 H45 H55 H65 H70 HDR P'.split(' ');

element('race-detail', `
  <header>
    <h2>Oblastní žebříček</h2><tag-chip danger>Zrušeno</tag-chip><span class="number">| 8354</span>
    <div class="flags"><tag-chip wide>ORIS</tag-chip><tag-chip wide>P</tag-chip><tag-chip wide>V</tag-chip></div>
  </header>
  <p class="league">11. Jihomoravská liga</p>
  <p class="note ok">Vzhledem k délce zákazu náš závod nelze přesunout na náhradní termín. Uspořádáme ho v tomto lese příští rok v některém z podzimních termínů. Vklady, které jsme již obdrželi, pošleme zpět v nejbližších dnech. Náhradní řešení je, že do Jihomoravské ligy byl zařazen závod Hanácké oblasti ve Stražisku ( PTE ) ve stejném termínu 28. září 2024. Přihlašujte se tedy prosím na tento závod.</p>
  <p class="note warn">Zrušeno. Z důvodů mimořádné kalamitní situace způsobené vichřicí ve dnech 14. a 15. září 2024 bude v příštím týdnu vydán zákaz vstupu do lesa na 3 měsíce.</p>
  <div class="cats"><span class="cat">Kategorie</span><div class="list">${CATEGORIES.map(c => `<tag-chip>${c}</tag-chip>`).join(' ')}</div></div>
  <div class="cols">
    <section class="left">
      <h3><icon-row icon="question">Termíny</icon-row></h3>
      <div class="rows"><icon-row class="ruled" icon="calendar-day">28. 09. 2024</icon-row><icon-row icon="circle-one">23. 09. 2024 23:59</icon-row></div>
      <h3><icon-row icon="question">Ostatní informace</icon-row></h3>
      <div class="rows"><icon-row icon="map">Ochoz u Brna</icon-row><icon-row icon="pin"><a href="#">Google Maps</a><a href="#">Mapy.cz</a></icon-row></div>
    </section>
    <section class="right">
      <h3><icon-row icon="newspaper" large>Rychlé novinky</icon-row></h3>
      <time>16.09.2024 - 00:00</time>
      <p>Tratě staví Libor Zřídkaveselý, zveřejněny předběžné délky</p>
      <h3><icon-row icon="question">Popis akce</icon-row></h3>
    </section>
  </div>`,
  `:host{display:block;box-sizing:border-box;min-height:760px;padding:24px;background:#fff;border:1px solid #d4d4d8;border-radius:12px;color:#18181b}
   h2,h3,p{margin:0}
   header{display:flex;align-items:flex-start;height:48px}
   h2{font-size:34px;line-height:48px;font-weight:700}
   header>tag-chip{margin-left:8px}
   .number{margin-left:21px;font-size:35px;line-height:48px}
   .flags{display:flex;gap:13px;margin:4px 6px 0 auto}
   .league{margin:13px 0 11px;font-size:24px;line-height:36px;color:#71717a}
   .note{padding:12px;border-radius:12px}
   .ok{background:#f0fdf4;color:#166534}.warn{background:#fefce8;color:#854d0e}
   .cats{display:flex;align-items:center;gap:18px;padding:4px 6px 12px;border-bottom:2px solid #e4e4e7}
   .list{font-size:24px;line-height:31px}
   .cat{padding:0 15px;border:1px solid #60a5fa;border-radius:6px;background:#dbeafe;color:#1e40af;font-size:18px;line-height:27px;font-weight:500}
   .cols{display:grid;grid-template-columns:minmax(0,1fr) minmax(0,2fr);gap:48px}
   .left{padding:14px 60px 0 0}
   .left h3{font-size:27px;font-weight:500}
   .rows{padding:27px 0 27px 24px;font-size:24px;color:#71717a}
   .ruled{border-bottom:1px dotted #c4c4c9}
   .rows a{margin-right:12px;color:#2563eb;text-decoration:underline;text-decoration-thickness:2px;text-underline-offset:5px}
   .right{padding-top:38px}
   .right h3{font-size:30px;font-weight:700}
   time{display:block;margin-top:9px;font-size:24px;line-height:36px;color:#71717a}
   .right p{margin:7px 0 27px;padding-bottom:11px;border-bottom:1px solid #d8d8dc;font-size:24px;line-height:36px;font-weight:600}`);

element('pointer-mark', `<svg viewBox="0 0 12 20" aria-hidden="true"><path d="M1 1v14l3-3 2.5 6 3-1.200L7 11h4.500Z" fill="#222" stroke="#fff"/></svg>`,
  `:host{position:absolute;right:114px;bottom:184px;width:12px;height:20px;filter:drop-shadow(1px 1px 1px rgba(0,0,0,.35))}svg{display:block}`);

element('resize-grip', `<svg viewBox="0 0 20 20" aria-hidden="true"><path d="M1 19 19 1M7 19 19 7M13 19l6-6" stroke="#9d9d9d" stroke-width="1.500"/></svg>`,
  `:host{position:absolute;right:2px;bottom:2px;width:20px;height:20px}svg{display:block}`);
</script>
</body>
</html>
